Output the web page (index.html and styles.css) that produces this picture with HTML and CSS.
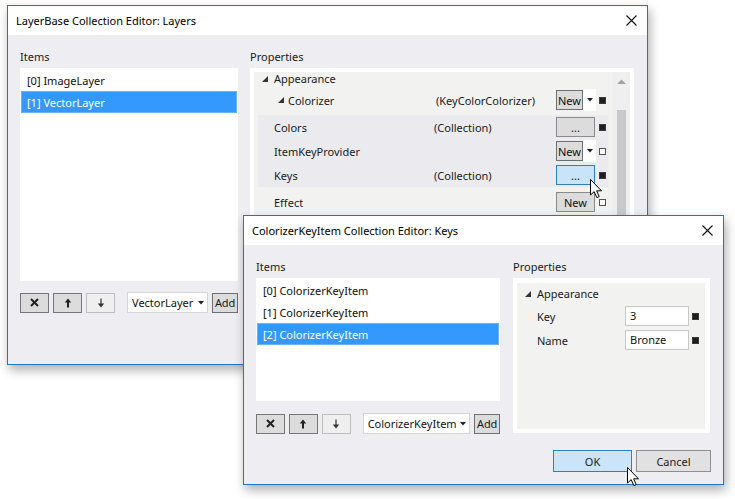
FILE: index.html
```html
<!DOCTYPE html>
<html>
<head>
<meta charset="utf-8">
<title>Collection Editors</title>
<link rel="stylesheet" href="styles.css">
</head>
<body>
<section class="win win-layers">
  <header class="titlebar">
    <span class="title">LayerBase Collection Editor: Layers</span>
    <svg class="close" width="11" height="11" viewBox="0 0 11 11"><path d="M0.5 0.5L10.5 10.5M10.5 0.5L0.5 10.5" stroke="#111" stroke-width="1.1"/></svg>
  </header>
  <div class="body body-layers">
    <div class="col items-col-1">
      <div class="label">Items</div>
      <ul class="list list-1">
        <li class="item">[0] ImageLayer</li>
        <li class="item sel">[1] VectorLayer</li>
      </ul>
      <div class="toolbar">
        <button class="tbtn"><svg width="9" height="9" viewBox="0 0 9 9"><path d="M1 1L8 8M8 1L1 8" stroke="#222" stroke-width="2"/></svg></button>
        <button class="tbtn"><svg width="8" height="10" viewBox="0 0 8 10"><path d="M4 0.5L0.8 4.5H3V9.5H5V4.5H7.2Z" fill="#222"/></svg></button>
        <button class="tbtn off"><svg width="8" height="10" viewBox="0 0 8 10"><path d="M4 9.5L0.8 5.5H3.4V0.5H4.6V5.5H7.2Z" fill="#333"/></svg></button>
        <div class="combo combo-1"><span>VectorLayer</span><svg width="6" height="4" viewBox="0 0 6 4"><path d="M0 0H6L3 3.5Z" fill="#222"/></svg></div>
        <button class="add">Add</button>
      </div>
    </div>
    <div class="col props-col-1">
      <div class="label">Properties</div>
      <div class="pgrid pgrid-1">
        <div class="prows">
          <div class="prow cat">
            <svg class="tri" width="6" height="6" viewBox="0 0 6 6"><path d="M6 0V6H0Z" fill="#333"/></svg>
            <span>Appearance</span>
          </div>
          <div class="prow subcat">
            <svg class="tri" width="6" height="6" viewBox="0 0 6 6"><path d="M6 0V6H0Z" fill="#333"/></svg>
            <span class="pname pname-sub">Colorizer</span>
            <span class="pval pval-sub">(KeyColorColorizer)</span>
            <span class="pbtns"><span class="btn newbtn">New</span><span class="drop"><svg width="6" height="4" viewBox="0 0 6 4"><path d="M0 0H6L3 3.5Z" fill="#222"/></svg></span></span>
            <span class="sq on"></span>
          </div>
          <div class="band">
            <div class="prow">
              <span class="pname">Colors</span>
              <span class="pval">(Collection)</span>
              <span class="pbtns"><span class="btn dots">...</span></span>
              <span class="sq on"></span>
            </div>
            <div class="prow">
              <span class="pname">ItemKeyProvider</span>
              <span class="pval"></span>
              <span class="pbtns"><span class="btn newbtn">New</span><span class="drop"><svg width="6" height="4" viewBox="0 0 6 4"><path d="M0 0H6L3 3.5Z" fill="#222"/></svg></span></span>
              <span class="sq off"></span>
            </div>
            <div class="prow">
              <span class="pname">Keys</span>
              <span class="pval">(Collection)</span>
              <span class="pbtns"><span class="btn dots hot">...</span></span>
              <span class="sq on"></span>
            </div>
          </div>
          <div class="prow effect">
            <span class="pname">Effect</span>
            <span class="pval"></span>
            <span class="pbtns"><span class="btn dots">New</span></span>
            <span class="sq off"></span>
          </div>
        </div>
        <div class="vscroll">
          <svg class="sarrow" width="9" height="5" viewBox="0 0 9 5"><path d="M0 5L4.5 0.5L9 5Z" fill="#a4a4a4"/></svg>
          <span class="thumb"></span>
        </div>
      </div>
    </div>
  </div>
  <svg class="cursor cursor-keys" width="13" height="20" viewBox="0 0 13 20"><path d="M0.5 0.5V16L4.2 12.6L6.8 18.6L9.2 17.6L6.7 11.8H11.5Z" fill="#fff" stroke="#000" stroke-width="1" stroke-linejoin="round"/></svg>
</section>

<section class="win win-keys">
  <header class="titlebar">
    <span class="title">ColorizerKeyItem Collection Editor: Keys</span>
    <svg class="close" width="11" height="11" viewBox="0 0 11 11"><path d="M0.5 0.5L10.5 10.5M10.5 0.5L0.5 10.5" stroke="#111" stroke-width="1.1"/></svg>
  </header>
  <div class="body body-keys">
    <div class="keys-grid">
      <div class="label">Items</div>
      <div class="label">Properties</div>
      <div class="col">
        <ul class="list list-2">
          <li class="item">[0] ColorizerKeyItem</li>
          <li class="item">[1] ColorizerKeyItem</li>
          <li class="item sel">[2] ColorizerKeyItem</li>
        </ul>
        <div class="toolbar toolbar-2">
          <button class="tbtn"><svg width="9" height="9" viewBox="0 0 9 9"><path d="M1 1L8 8M8 1L1 8" stroke="#222" stroke-width="2"/></svg></button>
          <button class="tbtn"><svg width="8" height="10" viewBox="0 0 8 10"><path d="M4 0.5L0.8 4.5H3V9.5H5V4.5H7.2Z" fill="#222"/></svg></button>
          <button class="tbtn off"><svg width="8" height="10" viewBox="0 0 8 10"><path d="M4 9.5L0.8 5.5H3.4V0.5H4.6V5.5H7.2Z" fill="#333"/></svg></button>
          <div class="combo combo-2"><span>ColorizerKeyItem</span><svg width="6" height="4" viewBox="0 0 6 4"><path d="M0 0H6L3 3.5Z" fill="#222"/></svg></div>
          <button class="add">Add</button>
        </div>
      </div>
      <div class="pgrid pgrid-2">
        <div class="prows">
          <div class="prow cat2">
            <svg class="tri" width="6" height="6" viewBox="0 0 6 6"><path d="M6 0V6H0Z" fill="#333"/></svg>
            <span>Appearance</span>
          </div>
          <div class="prow krow">
            <span class="kname">Key</span>
            <span class="tbox">3</span>
            <span class="sq on"></span>
          </div>
          <div class="prow krow">
            <span class="kname">Name</span>
            <span class="tbox">Bronze</span>
            <span class="sq on"></span>
          </div>
        </div>
      </div>
    </div>
    <div class="footer">
      <button class="dbtn ok">OK</button>
      <button class="dbtn cancel">Cancel</button>
    </div>
  </div>
  <svg class="cursor cursor-ok" width="13" height="20" viewBox="0 0 13 20"><path d="M0.5 0.5V16L4.2 12.6L6.8 18.6L9.2 17.6L6.7 11.8H11.5Z" fill="#fff" stroke="#000" stroke-width="1" stroke-linejoin="round"/></svg>
</section>
</body>
</html>
```

FILE: styles.css
```css
* { box-sizing: border-box; margin: 0; padding: 0; }
html, body { width: 735px; height: 499px; background: #fff; overflow: hidden; }
body {
  position: relative;
  font-family: "Noto Sans", "Liberation Sans", sans-serif;
  font-size: 11px;
  color: #1a1a1a;
}
button { font-family: inherit; font-size: 11px; color: #1a1a1a; }

.win {
  position: absolute;
  display: flex;
  flex-direction: column;
  background: #eeedf2;
  border: 1px solid #1f74c6;
  box-shadow: 2px 5px 10px rgba(0, 0, 0, 0.32);
}
.win-layers { left: 7px; top: 5px; width: 641px; height: 360px; }
.win-keys { left: 243px; top: 215px; width: 481px; height: 270px; }

.titlebar {
  height: 29px;
  flex: none;
  background: #fff;
  display: flex;
  align-items: center;
  justify-content: space-between;
  padding: 0 10px 0 8px;
  color: #000;
}
.close { display: block; }

.label { height: 16px; line-height: 16px; margin-bottom: 3px; color: #1a1a1a; }

.body-layers { display: flex; gap: 12px; padding: 14px 13px 0 12px; }
.items-col-1 { width: 218px; }
.props-col-1 { width: 384px; }

.list { list-style: none; background: #fff; padding: 1px; }
.list-1 { height: 213px; }
.list-2 { height: 123px; }
.item {
  height: 22px;
  line-height: 18px;
  padding: 2px 0 0 5px;
  border: 1px solid transparent;
  color: #111;
}
.item.sel { background: #3399ff; border-color: #6db3f6; color: #fff; }

.toolbar { display: flex; align-items: center; height: 21px; margin-top: 11px; }
.toolbar-2 { margin-top: 12px; }
.tbtn {
  width: 29px; height: 20px;
  margin-right: 4px;
  background: #dcdcdc;
  border: 1px solid #777;
  display: flex; align-items: center; justify-content: center;
}
.tbtn.off { background: #efefef; border-color: #bdbdbd; }
.combo {
  height: 21px;
  margin-left: 8px;
  background: #fff;
  border: 1px solid #d6d6d6;
  display: flex; align-items: center; justify-content: space-between;
  padding: 0 3px 0 4px;
  color: #111;
}
.combo-1 { width: 81px; }
.combo-2 { width: 108px; }
.add {
  width: 26px; height: 20px;
  margin-left: 4px;
  background: #dcdcdc;
  border: 1px solid #707070;
  padding: 0;
  letter-spacing: -0.2px;
}

.pgrid { display: flex; background: #f2f3f1; }
.pgrid-1 { height: 213px; border: 4px solid #fff; }
.prows { flex: 1; overflow: hidden; }
.prow { display: flex; align-items: center; height: 24px; }
.tri { flex: none; display: block; }
.cat { height: 13px; padding-left: 8px; }
.cat .tri { margin-right: 6px; }
.subcat { height: 30px; padding-left: 24px; }
.subcat .tri { margin-right: 4px; }
.pname { width: 160px; flex: none; white-space: nowrap; }
.pname-sub { width: 148px; }
.pval { width: 122px; flex: none; white-space: nowrap; }
.pval-sub { width: 120px; }
.band { margin: 0 4px; background: #ebeaef; }
.band .prow { padding-left: 16px; }
.effect { height: 30px; padding-left: 20px; }
.pbtns { width: 43px; flex: none; display: flex; align-items: center; }
.btn {
  height: 20px;
  display: flex; align-items: center; justify-content: center;
  background: #dcdcdc;
  border: 1px solid #8a8a8a;
  color: #111;
  line-height: 1;
}
.newbtn { width: 27px; border-color: #6f6f6f; }
.dots { width: 39px; }
.btn.hot { background: #c9e4f8; border-color: #2d7fc7; }
.drop {
  width: 13px; height: 22px;
  background: #fff;
  display: flex; align-items: center; justify-content: center;
}
.sq { width: 7px; height: 7px; flex: none; }
.sq.on { background: #1e1e1e; border: 1px solid #3a3a3a; }
.sq.off { background: #fff; border: 1px solid #555; }

.vscroll {
  width: 18px;
  flex: none;
  background: #efeff0;
  display: flex; flex-direction: column; align-items: center;
}
.sarrow { margin-top: 7px; display: block; }
.thumb { width: 9px; flex: 1; margin-top: 26px; background: #c9c9cb; }

.body-keys { display: flex; flex-direction: column; padding: 14px 12px 0 12px; }
.keys-grid { display: grid; grid-template-columns: 244px 197px; column-gap: 13px; }
.pgrid-2 { height: 155px; border-style: solid; border-color: #fff; border-width: 5px 5px 4px 4px; }
.cat2 { height: 21px; padding-left: 8px; }
.cat2 .tri { margin-right: 6px; }
.krow { padding-left: 20px; }
.kname { width: 88px; flex: none; }
.tbox {
  width: 64px; height: 20px;
  background: #fff;
  border: 1px solid #c8c8c8;
  padding-left: 4px;
  line-height: 18px;
  margin-right: 3px;
  color: #111;
}

.footer { display: flex; justify-content: flex-end; gap: 4px; margin-top: 16px; }
.dbtn { height: 22px; }
.ok { width: 79px; background: #cce4f7; border: 1px solid #2f7fc4; }
.cancel { width: 75px; background: #e1e1e1; border: 1px solid #8e8e8e; }

.cursor { position: absolute; display: block; }
.cursor-keys { left: 582px; top: 173px; }
.cursor-ok { left: 383px; top: 251px; }
```
